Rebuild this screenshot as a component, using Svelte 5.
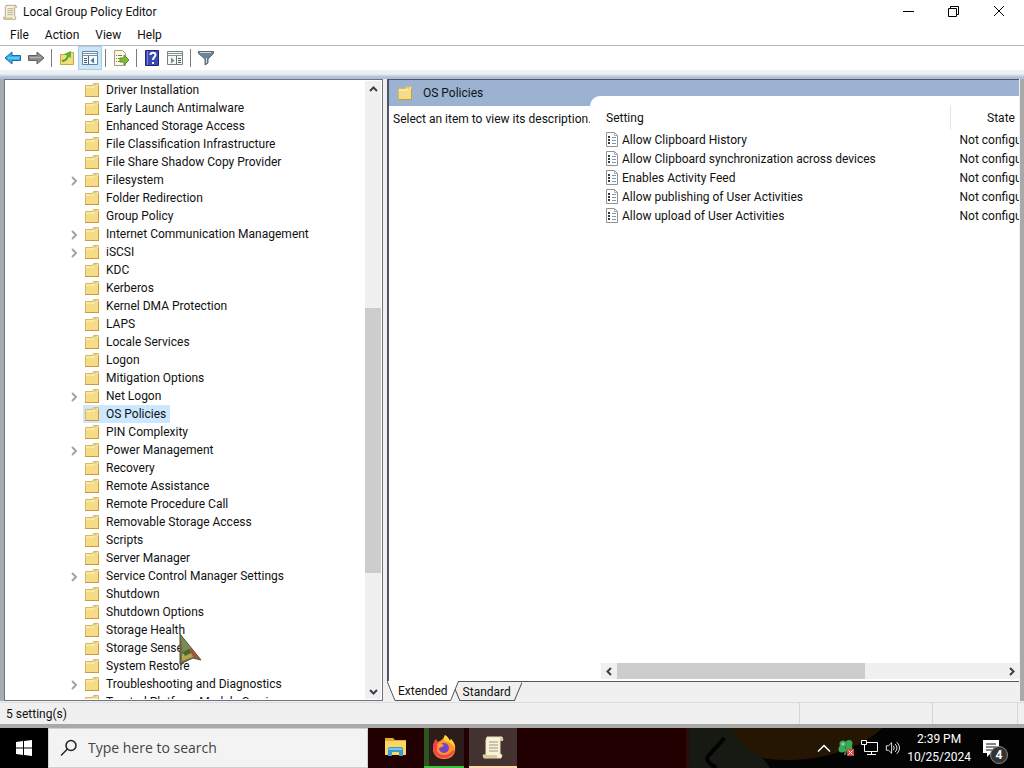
<script>
  const folders = [
    { name: 'Driver Installation' },
    { name: 'Early Launch Antimalware' },
    { name: 'Enhanced Storage Access' },
    { name: 'File Classification Infrastructure' },
    { name: 'File Share Shadow Copy Provider' },
    { name: 'Filesystem', children: true },
    { name: 'Folder Redirection' },
    { name: 'Group Policy' },
    { name: 'Internet Communication Management', children: true },
    { name: 'iSCSI', children: true },
    { name: 'KDC' },
    { name: 'Kerberos' },
    { name: 'Kernel DMA Protection' },
    { name: 'LAPS' },
    { name: 'Locale Services' },
    { name: 'Logon' },
    { name: 'Mitigation Options' },
    { name: 'Net Logon', children: true },
    { name: 'OS Policies' },
    { name: 'PIN Complexity' },
    { name: 'Power Management', children: true },
    { name: 'Recovery' },
    { name: 'Remote Assistance' },
    { name: 'Remote Procedure Call' },
    { name: 'Removable Storage Access' },
    { name: 'Scripts' },
    { name: 'Server Manager' },
    { name: 'Service Control Manager Settings', children: true },
    { name: 'Shutdown' },
    { name: 'Shutdown Options' },
    { name: 'Storage Health' },
    { name: 'Storage Sense' },
    { name: 'System Restore' },
    { name: 'Troubleshooting and Diagnostics', children: true },
    { name: 'Trusted Platform Module Services' }
  ];

  const settings = [
    'Allow Clipboard History',
    'Allow Clipboard synchronization across devices',
    'Enables Activity Feed',
    'Allow publishing of User Activities',
    'Allow upload of User Activities'
  ];

  let selected = 'OS Policies';
  let view = 'Extended';
</script>

{#snippet folder()}
  <svg class="folder" width="16" height="16" viewBox="0 0 16 16" aria-hidden="true">
    <path d="M1.5 3.5h7l1-2h5v13h-13z" fill="#f6dc86" stroke="#dcb65c" />
    <path d="M2 5h8l1-2h3" fill="none" stroke="#fff3bf" />
    <path d="M10.500 2.500h2v1h-2z" fill="#8fb9a0" />
    <path d="M1 14.500h14M14.500 4v10" stroke="#c89b3c" />
  </svg>
{/snippet}

{#snippet scroll(width, lines)}
  <svg {width} height={width} viewBox="0 0 24 24" aria-hidden="true">
    <path d="M6 2h15l1 3h-3v14l2 1-1 3H3l-1-3h3V5z" fill="#fbf2d6" stroke={lines} />
    <path d="M8 7h9M8 10h9M8 13h9M8 16h9" stroke="#96938a" />
    <path d="M19 3l3 0v3h-3zM2 20h14v3H3z" fill="#d8c89e" />
  </svg>
{/snippet}

{#snippet chevron(dir)}
  <svg class={dir} width="9" height="9" viewBox="0 0 9 9" aria-hidden="true">
    <path d="M1 6l3.500-3.500L8 6" fill="none" stroke="#404040" stroke-width="2" />
  </svg>
{/snippet}

<div class="screen">
  <header class="titlebar">
    {@render scroll(16, '#8f8468')}
    <h1>Local Group Policy Editor</h1>
    <button aria-label="Minimize"><svg width="11" height="11"><path d="M0 5.500h11" stroke="#000" /></svg></button>
    <button aria-label="Restore">
      <svg width="11" height="11" fill="none" stroke="#000"><path d="M.5 2.500h8v8h-8zM2.500 2.500v-2h8v8h-2" /></svg>
    </button>
    <button aria-label="Close"><svg width="12" height="12"><path d="M1 1l10 10M11 1L1 11" stroke="#000" /></svg></button>
  </header>

  <nav class="menu">
    <button>File</button>
    <button>Action</button>
    <button>View</button>
    <button>Help</button>
  </nav>

  <div class="toolbar">
    <button aria-label="Back">
      <svg width="18" height="16"><path d="M1 8l7-6v3.500h8.500v5H8V14z" fill="#38aee8" stroke="#176fae" /><path d="M4 8h11" stroke="#8ddcf8" /></svg>
    </button>
    <button aria-label="Forward">
      <svg width="18" height="16"><path d="M17 8l-7-6v3.500H1.500v5H10V14z" fill="#8b8b8b" stroke="#5f5f5f" /><path d="M3 7.500h11" stroke="#b5b5b5" /></svg>
    </button>
    <span class="sep"></span>
    <button aria-label="Up one level">
      <svg width="16" height="16"><path d="M1.500 4.500h7l1-2h5v12h-13z" fill="#f3dc7c" stroke="#c9a548" /><path d="M3 11c3 0 5-2 6-5" fill="none" stroke="#45a52c" stroke-width="2" /><path d="M5 4l7-3v7z" fill="#54b436" /></svg>
    </button>
    <button class="on" aria-label="Show console tree">
      <svg width="18" height="16"><path d="M1.500 1.500h15v13h-15z" fill="#f8fbfd" stroke="#69839a" /><path d="M1 3.500h16M1 5.500h16" stroke="#7890a5" /><path d="M7.500 6v8" stroke="#52677b" /><path d="M3 8.500h3M3 10.500h3M3 12.500h3" stroke="#39577a" /><path d="M13 7.500v6L9.500 10.500z" fill="#397bb5" /></svg>
    </button>
    <span class="sep"></span>
    <button aria-label="Export list">
      <svg width="18" height="16"><path d="M2.500.5h8l3 3v12h-11z" fill="#fff9dc" stroke="#a0a084" /><path d="M4 5.500h6M4 8.500h5M4 11.500h6" stroke="#6b7c73" stroke-dasharray="1 1 5 0" /><path d="M8 8h4V5l5 5-5 5v-3H8z" fill="#82ba38" stroke="#5c962a" /></svg>
    </button>
    <span class="sep"></span>
    <button aria-label="Help">
      <svg width="16" height="16"><path d="M1.500.5h13v15h-13z" fill="#3949b5" stroke="#1d2870" /><path d="M3.500 1v14" stroke="#7984da" /><path d="M6.500 5c0-3 5-3 5 0 0 2-2.500 2-2.500 5" fill="none" stroke="#fff" stroke-width="2" /><path d="M8 12h2v2H8z" fill="#fff" /></svg>
    </button>
    <button aria-label="Show action pane">
      <svg width="18" height="16"><path d="M1.500 1.500h15v13h-15z" fill="#f7f7f4" stroke="#787e83" /><path d="M1 3.500h16M1 5.500h16" stroke="#8a9094" /><path d="M10.500 6v8" stroke="#687178" /><path d="M12 8.500h3M12 10.500h3M12 12.500h3" stroke="#44515e" /><path d="M5 7.500v6l3.500-3z" fill="#6d8f9c" /></svg>
    </button>
    <span class="sep"></span>
    <button aria-label="Filter">
      <svg width="16" height="16"><path d="M.5 1.500h15v2L10 9v4l-3 2V9L.5 3.500z" fill="#6f8596" stroke="#54697b" /><path d="M2 2.500h11M8.500 8v5" fill="none" stroke="#cad6dd" /></svg>
    </button>
  </div>

  <main>
    <section class="tree">
      <ul>
        {#each folders as item}
          <li>
            {#if item.children}
              <svg class="twist" width="6" height="10"><path d="M1 1l4 4-4 4" fill="none" stroke="#a3a3a3" stroke-width="2" /></svg>
            {/if}
            <button class:selected={item.name === selected} on:click={() => (selected = item.name)}>
              {@render folder()}<span>{item.name}</span>
            </button>
          </li>
        {/each}
      </ul>
      <div class="vbar">
        <button aria-label="Scroll up">{@render chevron('up')}</button>
        <div class="vtrack"><i></i></div>
        <button aria-label="Scroll down">{@render chevron('down')}</button>
      </div>
    </section>

    <div class="side">
      <section class="details">
        <h2>{@render folder()}{selected}</h2>
        <div class="body">
          <p>Select an item to view its description.</p>
          <div class="listing">
            <div class="tablewrap">
              <table>
                <thead>
                  <tr><th>Setting</th><th>State</th></tr>
                </thead>
                <tbody>
                  {#each settings as setting}
                    <tr>
                      <td>
                        <svg width="14" height="15" aria-hidden="true"><path d="M1.500.5h8l3 3v11h-11z" fill="#fff" stroke="#8d9399" /><path d="M9.500.5v3h3" fill="none" stroke="#a8adb2" /><path d="M3 4h2v2H3zM3 7h2v2H3zM3 10h2v2H3z" fill="#34393f" /><path d="M7 5.500h4M7 8.500h4M7 11.500h4" stroke="#8296ad" /></svg>
                        {setting}
                      </td>
                      <td>Not configured</td>
                    </tr>
                  {/each}
                </tbody>
              </table>
            </div>
            <div class="hbar">
              <button aria-label="Scroll left">{@render chevron('left')}</button>
              <div class="htrack"><i></i></div>
              <button aria-label="Scroll right">{@render chevron('right')}</button>
            </div>
          </div>
        </div>
      </section>
      <div class="tabs">
        {#each ['Extended', 'Standard'] as tab}
          <button class:active={view === tab} on:click={() => (view = tab)}>
            <svg viewBox="0 0 72 19" preserveAspectRatio="none" aria-hidden="true">
              <path d="M0 0l8 18.500h56L72 0" fill={view === tab ? '#fff' : '#f0f0f0'} stroke="#555" vector-effect="non-scaling-stroke" />
            </svg>
            <span>{tab}</span>
          </button>
        {/each}
      </div>
    </div>
  </main>

  <footer class="status">
    <span>{settings.length} setting(s)</span><span></span><span></span>
  </footer>

  <div class="taskbar">
    <svg class="wallpaper" viewBox="0 0 334 40" preserveAspectRatio="none" aria-hidden="true">
      <path d="M0 0h334v40H0z" fill="#030304" />
      <path d="M0 0h3v40H0z" fill="#320b08" />
      <path d="M3 0h52l28 40H3z" fill="#171a12" />
      <path d="M44 0h150c-25 24-72 36-113 31C62 27 53 14 44 0z" fill="#241603" />
      <path d="M38 10L22 28q-4 5 8 12" fill="none" stroke="#020202" stroke-width="4" />
    </svg>
    <button class="start" aria-label="Start">
      <svg width="16" height="16"><path d="M0 2l7-1v6.500H0zM8 1l8-1v7.500H8zM0 8.500h7V15l-7-1zM8 8.500h8V16l-8-1z" fill="#fff" /></svg>
    </button>
    <label class="search">
      <svg width="18" height="18"><circle cx="11" cy="6.500" r="5" fill="none" stroke="#222" stroke-width="1.500" /><path d="M7.500 10L1 16.500" stroke="#222" stroke-width="1.500" /></svg>
      <input type="text" placeholder="Type here to search" aria-label="Search" />
    </label>
    <button class="app explorer" aria-label="File Explorer">
      <svg width="24" height="22"><path d="M1 2h8l2 2h11v4H1z" fill="#e6a92d" /><path d="M1 5h21v14H1z" fill="#fbd75f" /><path d="M4 20v-7q0-2 2-2h11q2 0 2 2v7h-4v-4H8v4z" fill="#3a9bd3" /><path d="M5 12h13v2H5z" fill="#77c4e6" /></svg>
    </button>
    <button class="app firefox" aria-label="Firefox">
      <svg width="24" height="24" viewBox="0 0 24 24">
        <path d="M13 0c3 2 4 4 5 6l1-2c3 3 5 7 4 12-1 5-5 8-11 8S1 20 1 14c0-4 1-7 3-10l1 3 3-1c2-1 4-3 5-6z" fill="#ff9426" />
        <path d="M1 12c0 7 5 11 11 11 5 0 9-3 11-8-1 0-2 1-3 1-2 3-5 4-8 4-5 0-8-3-7-8 0-2 1-4 3-6l-3 1-1-3c-2 2-3 5-3 8z" fill="#f43f4d" />
        <path d="M13 0c3 2 4 4 5 6l1-2c3 3 4 6 4 9-2-3-5-6-10-7-2-1-1-4 0-6z" fill="#ffd33e" />
        <circle cx="12" cy="13" r="5" fill="#7543c7" /><path d="M5 9c3-1 5 0 7 1-1 2-3 2-5 3z" fill="#ff9d2d" />
      </svg>
    </button>
    <button class="app policy" aria-label="Local Group Policy Editor">{@render scroll(24, '#eadfbe')}</button>
    <div class="tray">
      <button aria-label="Show hidden icons"><svg width="14" height="9"><path d="M1 7.500l6-6 6 6" fill="none" stroke="#fff" stroke-width="1.500" /></svg></button>
      <button aria-label="Clover">
        <svg width="16" height="16"><path d="M8 9l-1 6" stroke="#39864b" stroke-width="2" /><g fill="#38a957"><circle cx="5" cy="4" r="3.500" /><circle cx="11" cy="3.500" r="3.500" /><circle cx="4" cy="9" r="3.500" /><circle cx="11" cy="8.500" r="3.500" /></g><circle cx="5" cy="4" r="1.500" fill="#85dd98" /><path d="M9 9h7v7H9z" fill="#d64242" /><path d="M10.500 10.500l4 4M14.500 10.500l-4 4" stroke="#fff" /></svg>
      </button>
      <button aria-label="Network"><svg width="17" height="16" fill="none" stroke="#fff"><path d="M5 2.500h11.500v9H3.500V7M1 .5h4.500v4H.5v-4zM3.500 4.500V8M10.500 12v3M6 14.500h9" /></svg></button>
      <button aria-label="Volume"><svg width="15" height="16" viewBox="0 0 17 16" fill="none" stroke="#fff"><path d="M1.500 5.500H4L7.500 2v12L4 10.500H1.500zM9.500 5.500q2 2.500 0 5M11.500 3.500q4 4.500 0 9M13.500 1.500q6 6.500 0 13" /></svg></button>
      <time>2:39 PM<br />10/25/2024</time>
      <button class="notify" aria-label="4 notifications">
        <svg width="18" height="17"><path d="M1 0h16v13H9l-4 4v-4H1z" fill="#fff" /><path d="M4 4h10M4 7h10M4 10h6" stroke="#111" /></svg>
        <b>4</b>
      </button>
    </div>
  </div>

  <svg class="pointer" width="24" height="32" aria-hidden="true">
    <path d="M1 1l21 26-8-2-13 6z" fill="#75704a" stroke="#4b5131" />
    <path d="M2 3l10 12-8 4z" fill="#788b58" /><path d="M12 15l9 11-7-2-4-4z" fill="#a65439" />
    <path d="M3 21l9-1 2 4-11 4z" fill="#b5a64b" /><path d="M4 19l6-3 2 4-6 3z" fill="#4a6638" />
  </svg>
</div>

<style>
  :global(body) {
    margin: 0;
  }

  .screen {
    position: relative;
    height: 100vh;
    display: flex;
    flex-direction: column;
    overflow: hidden;
    background: #fff;
    color: #111;
    font: 12px/18px Roboto, "Open Sans", sans-serif;
  }

  button {
    display: flex;
    align-items: center;
    justify-content: center;
    margin: 0;
    padding: 0;
    border: 0;
    background: none;
    color: inherit;
    font: inherit;
  }

  svg {
    flex: none;
    display: block;
  }

  h1,
  h2,
  p,
  ul {
    margin: 0;
    padding: 0;
    font: inherit;
  }

  .titlebar {
    display: flex;
    align-items: center;
    height: 24px;
    padding: 0 3px 0 2px;
  }

  .titlebar h1 {
    flex: 1;
    margin-left: 5px;
  }

  .titlebar button {
    width: 45px;
    height: 20px;
    margin-bottom: 2px;
  }

  .menu {
    display: flex;
    height: 21px;
    padding-left: 2px;
    border-bottom: 1px solid #b9b9b9;
  }

  .menu button {
    padding: 0 8px;
  }

  .toolbar {
    display: flex;
    align-items: center;
    gap: 1px;
    height: 24px;
    padding-left: 2px;
  }

  .toolbar button {
    width: 22px;
    height: 22px;
  }

  .toolbar .on {
    background: #cce6f8;
    outline: 1px solid #a5cdea;
  }

  .sep {
    width: 1px;
    height: 18px;
    margin: 0 3px;
    background: #7b7b7b;
  }

  main {
    flex: 1;
    min-height: 0;
    display: flex;
    gap: 4px;
    padding: 9px 5px 0 4px;
    background:
      linear-gradient(#f1f1f1 0, #e9f1f6 4px, #b2c0d4 7px, #b2c0d4 9px, transparent 9px),
      linear-gradient(90deg, #a6abb4 4px, #f0f0f0 4px, #f0f0f0 calc(100% - 4px), #a9a9a9 calc(100% - 4px));
    border-bottom: 1px solid #f0f0f0;
  }

  .tree {
    flex: 0 0 379px;
    box-sizing: border-box;
    display: flex;
    border: 1px solid #6e7380;
    padding: 1px;
    background: #fff;
    overflow: hidden;
  }

  .tree ul {
    flex: 1;
    overflow: hidden;
    list-style: none;
  }

  .tree li {
    display: flex;
    align-items: center;
    justify-content: flex-start;
    height: 18px;
    padding-left: 77px;
  }

  .twist {
    margin-left: -12px;
    margin-right: 6px;
    margin-top: 2px;
  }

  .tree li button {
    height: 18px;
    padding: 0 4px 0 1px;
    gap: 6px;
    white-space: nowrap;
  }

  .tree li .selected {
    background: #cce8ff;
  }

  .vbar {
    width: 16px;
    display: flex;
    flex-direction: column;
    background: #f0f0f0;
  }

  .vbar button,
  .hbar button {
    width: 16px;
    height: 16px;
  }

  .vtrack,
  .htrack {
    flex: 1;
    display: flex;
  }

  .vtrack {
    flex-direction: column;
  }

  .vtrack::before {
    content: '';
    flex: 211;
  }

  .vtrack::after {
    content: '';
    flex: 110;
  }

  .vtrack i {
    flex: 265;
    background: #cdcdcd;
  }

  .down {
    transform: rotate(180deg);
  }

  .left {
    transform: rotate(-90deg);
  }

  .right {
    transform: rotate(90deg);
  }

  .side {
    flex: 1;
    min-width: 0;
    display: flex;
    flex-direction: column;
  }

  .details {
    flex: 1;
    min-height: 0;
    display: flex;
    flex-direction: column;
    border: 1px solid #4f5560;
    border-left-width: 2px;
    border-right: 0;
    background: #fff;
  }

  h2 {
    display: flex;
    align-items: center;
    gap: 10px;
    height: 26px;
    padding-left: 8px;
    background: #9bb2d1;
  }

  .body {
    flex: 1;
    min-height: 0;
    display: flex;
  }

  .body p {
    flex: 0 0 201px;
    min-width: 0;
    box-sizing: border-box;
    padding: 4px 0 0 4px;
    white-space: nowrap;
  }

  .listing {
    flex: 1;
    min-width: 0;
    display: flex;
    flex-direction: column;
    margin-top: -10px;
    padding: 9px 0 2px 11px;
    border-top-left-radius: 10px;
    background: #fff;
  }

  .tablewrap {
    flex: 1;
    overflow: hidden;
  }

  table {
    width: 450px;
    table-layout: fixed;
    border-collapse: collapse;
  }

  th {
    height: 25px;
    padding: 0;
    font-weight: normal;
  }

  th:first-child {
    width: 344px;
    padding-left: 5px;
    text-align: left;
    border-right: 1px solid #e5e5e5;
  }

  td {
    height: 19px;
    padding: 0 0 0 9px;
    white-space: nowrap;
  }

  td:first-child {
    display: flex;
    align-items: center;
    gap: 3px;
    padding-left: 4px;
  }

  .hbar {
    display: flex;
    height: 16px;
    background: #f0f0f0;
  }

  .htrack i {
    flex: 247;
    background: #cdcdcd;
  }

  .htrack::after {
    content: '';
    flex: 138;
  }

  .tabs {
    display: flex;
    height: 19px;
  }

  .tabs button {
    position: relative;
    padding: 0 11px;
  }

  .tabs button + button {
    margin-left: -7px;
  }

  .tabs svg {
    position: absolute;
    inset: 0;
    width: 100%;
    height: 100%;
  }

  .tabs .active {
    z-index: 1;
    margin-top: -1px;
  }

  .tabs span {
    position: relative;
  }

  .status {
    display: flex;
    height: 21px;
    padding: 0 6px;
    line-height: 22px;
    background: #f0f0f0;
    border-top: 1px solid #dcdcdc;
    border-bottom: 4px solid #a9a9a9;
  }

  .status span {
    flex: 0 0 85px;
    box-sizing: border-box;
    border-right: 1px solid #d6d6d6;
  }

  .status span:first-child {
    flex: 1;
  }

  .status span:nth-child(2) {
    flex-basis: 133px;
  }

  .taskbar {
    position: relative;
    display: flex;
    height: 40px;
    background: #200000;
  }

  .wallpaper {
    position: absolute;
    right: 0;
    width: 33%;
    height: 40px;
  }

  .start {
    width: 48px;
    background: #000;
  }

  .search {
    flex: 0 1 320px;
    box-sizing: border-box;
    display: flex;
    align-items: center;
    gap: 10px;
    padding-left: 11px;
    background: #f3f3f3;
    border: 1px solid #d0d0d0;
  }

  .search input {
    flex: 1;
    min-width: 0;
    padding: 0;
    border: 0;
    outline: 0;
    background: none;
    font: 14px/20px "Open Sans", "Noto Sans", sans-serif;
  }

  .search input::placeholder {
    color: #444;
    opacity: 1;
  }

  .app {
    box-sizing: border-box;
    width: 48px;
    border-bottom: 2px solid transparent;
  }

  .explorer {
    margin: 0 4px;
  }

  .firefox {
    width: 40px;
    background: linear-gradient(90deg, #2e541f 5px, #2c1c1a 5px);
    border-color: #3ac33a;
  }

  .policy {
    margin-left: 5px;
    background: #443230;
    border-color: #ffd6ad;
  }

  .tray {
    position: relative;
    display: flex;
    align-items: center;
    gap: 7px;
    margin-left: auto;
    padding-right: 24px;
    color: #fff;
  }

  .tray time {
    line-height: 18px;
    text-align: center;
  }

  .notify {
    position: relative;
    margin-left: 4px;
  }

  .notify b {
    position: absolute;
    left: 8px;
    top: 6px;
    width: 16px;
    border: 1px solid #888;
    border-radius: 50%;
    background: #333;
    font-size: 12px;
    line-height: 16px;
  }

  .pointer {
    position: absolute;
    left: 179px;
    top: 633px;
    pointer-events: none;
  }
</style>
